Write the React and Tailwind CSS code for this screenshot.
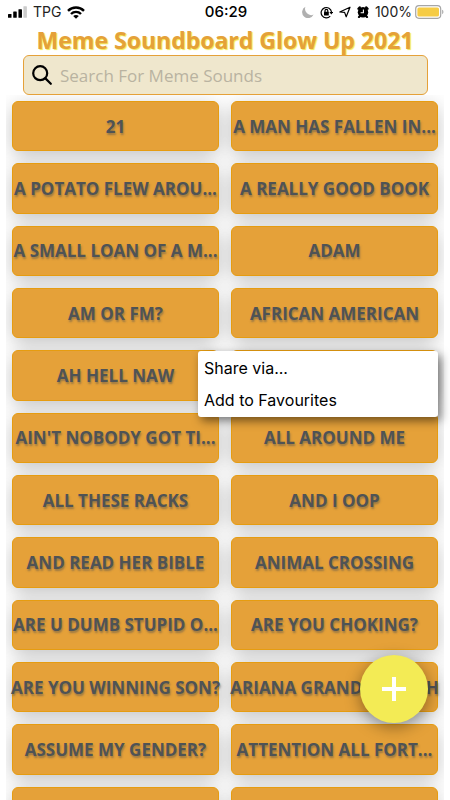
import React from 'react';

const sounds = [
  '21', 'A MAN HAS FALLEN IN...',
  'A POTATO FLEW AROU...', 'A REALLY GOOD BOOK',
  'A SMALL LOAN OF A M...', 'ADAM',
  'AM OR FM?', 'AFRICAN AMERICAN',
  'AH HELL NAW', 'AIRHORN',
  "AIN'T NOBODY GOT TI...", 'ALL AROUND ME',
  'ALL THESE RACKS', 'AND I OOP',
  'AND READ HER BIBLE', 'ANIMAL CROSSING',
  'ARE U DUMB STUPID O...', 'ARE YOU CHOKING?',
  'ARE YOU WINNING SON?', 'ARIANA GRANDE COUGH',
  'ASSUME MY GENDER?', 'ATTENTION ALL FORT...',
  'AUGHHH', 'AVENGERS',
];

function StatusBar() {
  return (
    <div className="grid h-6 grid-cols-[1fr_auto_1fr] items-center pl-2 pr-[6px] font-['Inter',sans-serif] leading-6 text-black">
      <div className="flex items-center gap-[6px]">
        <svg className="h-[12px] w-[19px]" viewBox="0 0 20 12">
          <rect x="0" y="8" width="3.7" height="4" rx="0.6" />
          <rect x="5.5" y="5.5" width="3.7" height="6.5" rx="0.6" />
          <rect x="11" y="3" width="3.7" height="9" rx="0.6" />
          <rect x="16.2" y="0" width="3.7" height="12" rx="0.6" fill="#ccc" />
        </svg>
        <span className="text-sm leading-6 text-[#222]">TPG</span>
        <svg className="h-[13px] w-[18px]" viewBox="0 0 18 13" fill="none" stroke="#000" strokeWidth="2.4">
          <path d="M1 4.8C5.4 .4 12.6 .4 17 4.8" />
          <path d="M4 8C6.8 5.2 11.2 5.2 14 8" />
          <path d="M9 12.8 6.2 10C7.8 8.6 10.2 8.6 11.8 10Z" fill="#000" stroke="none" />
        </svg>
      </div>
      <span className="text-[15px] font-medium">06:29</span>
      <div className="flex items-center justify-end gap-[6px]">
        <svg className="h-3 w-3" viewBox="0 0 12 12" fill="#b0b0b0">
          <path d="M3.4 .8A6 6 0 1 0 11.6 8.6 6.2 6.2 0 0 1 3.4 .8Z" />
        </svg>
        <svg className="h-[13px] w-[13px]" viewBox="0 0 13 13" fill="none" stroke="#000" strokeWidth="1.2">
          <path d="M10.2 10.2A5.2 5.2 0 1 1 11.5 6" />
          <path d="M9.4 6h3.8l-1.9 2.6Z" fill="#000" stroke="none" />
          <rect x="4" y="5.8" width="4.8" height="3.7" rx="0.5" fill="#000" stroke="none" />
          <path d="M5 6V4.8a1.4 1.4 0 0 1 2.8 0V6" />
        </svg>
        <svg className="h-3 w-3" viewBox="0 0 12 12" fill="none" stroke="#000" strokeWidth="1.2" strokeLinejoin="round">
          <path d="M11 1.2.8 6l4.8.4 1.6 4.4Z" />
        </svg>
        <svg className="h-3 w-3" viewBox="0 0 12 12">
          <circle cx="6" cy="6.3" r="5.2" />
          <path d="M1.4 2.8 2.8 1.4M10.6 2.8 9.2 1.4M2 11 3 10M10 11 9 10" stroke="#000" strokeWidth="2.2" strokeLinecap="round" />
          <path d="M6.4 3.6v3.1H3.6" fill="none" stroke="#fff" strokeWidth="1.1" />
        </svg>
        <div className="flex items-center gap-[3px]">
          <span className="text-sm leading-6 text-[#222]">100%</span>
          <svg className="h-[14px] w-[29px]" viewBox="0 0 29 14">
            <rect x=".7" y=".7" width="25" height="12.6" rx="3.2" fill="none" stroke="#a6a6a6" strokeWidth="1.2" />
            <rect x="2.4" y="2.4" width="21.6" height="9.2" rx="1.6" fill="#f6cc45" />
            <path d="M27.2 4.8c1.6.5 1.6 3.9 0 4.4Z" fill="#a6a6a6" />
          </svg>
        </div>
      </div>
    </div>
  );
}

function SearchBox() {
  return (
    <label className="ml-[23px] mr-[22px] flex h-10 items-center gap-2 rounded-md border border-[#e5a139] bg-[#efe7cd] pl-2">
      <svg className="h-5 w-5 shrink-0" viewBox="0 0 20 20" fill="none" stroke="#000" strokeWidth="2.2" strokeLinecap="round">
        <circle cx="8.2" cy="8.2" r="7" />
        <path d="m13.4 13.4 5.4 5.4" />
      </svg>
      <input
        type="text"
        aria-label="Search"
        placeholder="Search For Meme Sounds"
        className="min-w-0 flex-1 bg-transparent pt-px text-[17px] text-black outline-none placeholder:text-[#b9b3a1]"
      />
    </label>
  );
}

function SoundButton({ name }) {
  return (
    <button
      type="button"
      className="relative flex aspect-[37/9] min-w-0 items-center justify-center whitespace-nowrap rounded-md border border-[#e69c10] bg-[#e5a139] text-[17px] font-bold leading-none text-[#4f5355] text-shadow-[1px_2px_2px_rgba(80,80,80,0.5)] before:absolute before:inset-0 before:-z-10 before:rounded-md before:shadow-[0_5px_20px_rgba(0,0,0,0.25)]"
    >
      {name}
    </button>
  );
}

function ContextMenu() {
  return (
    <div className="absolute right-3 top-[351px] flex w-60 flex-col rounded-[3px] bg-white py-px font-['Inter',sans-serif] text-base text-black shadow-[3px_4px_10px_rgba(0,0,0,0.5)]">
      <button type="button" className="h-8 px-[6px] text-left">Share via...</button>
      <button type="button" className="h-8 px-[6px] text-left">Add to Favourites</button>
    </div>
  );
}

export default function App() {
  return (
    <div className="relative flex h-screen flex-col overflow-hidden bg-white font-['Open_Sans',sans-serif]">
      <StatusBar />
      <h1 className="h-[31px] text-center text-[23px] font-bold leading-8 text-[#e5a139] text-shadow-[1px_1px_1px_#f3e94f]">
        Meme Soundboard Glow Up 2021
      </h1>
      <SearchBox />
      <main className="isolate mx-[6px] grid min-h-0 flex-1 grid-cols-2 content-start gap-3 overflow-hidden px-[6px] pt-[6px]">
        {sounds.map((name) => (
          <SoundButton key={name} name={name} />
        ))}
      </main>
      <ContextMenu />
      <button
        type="button"
        aria-label="Add sound"
        className="absolute bottom-[77px] right-[22px] flex h-[68px] w-[68px] items-center justify-center rounded-full bg-[#f3eb55] shadow-[0_4px_16px_rgba(0,0,0,0.4)]"
      >
        <svg className="h-6 w-6" viewBox="0 0 24 24" stroke="#fff" strokeWidth="4">
          <path d="M12 0v24M0 12h24" />
        </svg>
      </button>
    </div>
  );
}
